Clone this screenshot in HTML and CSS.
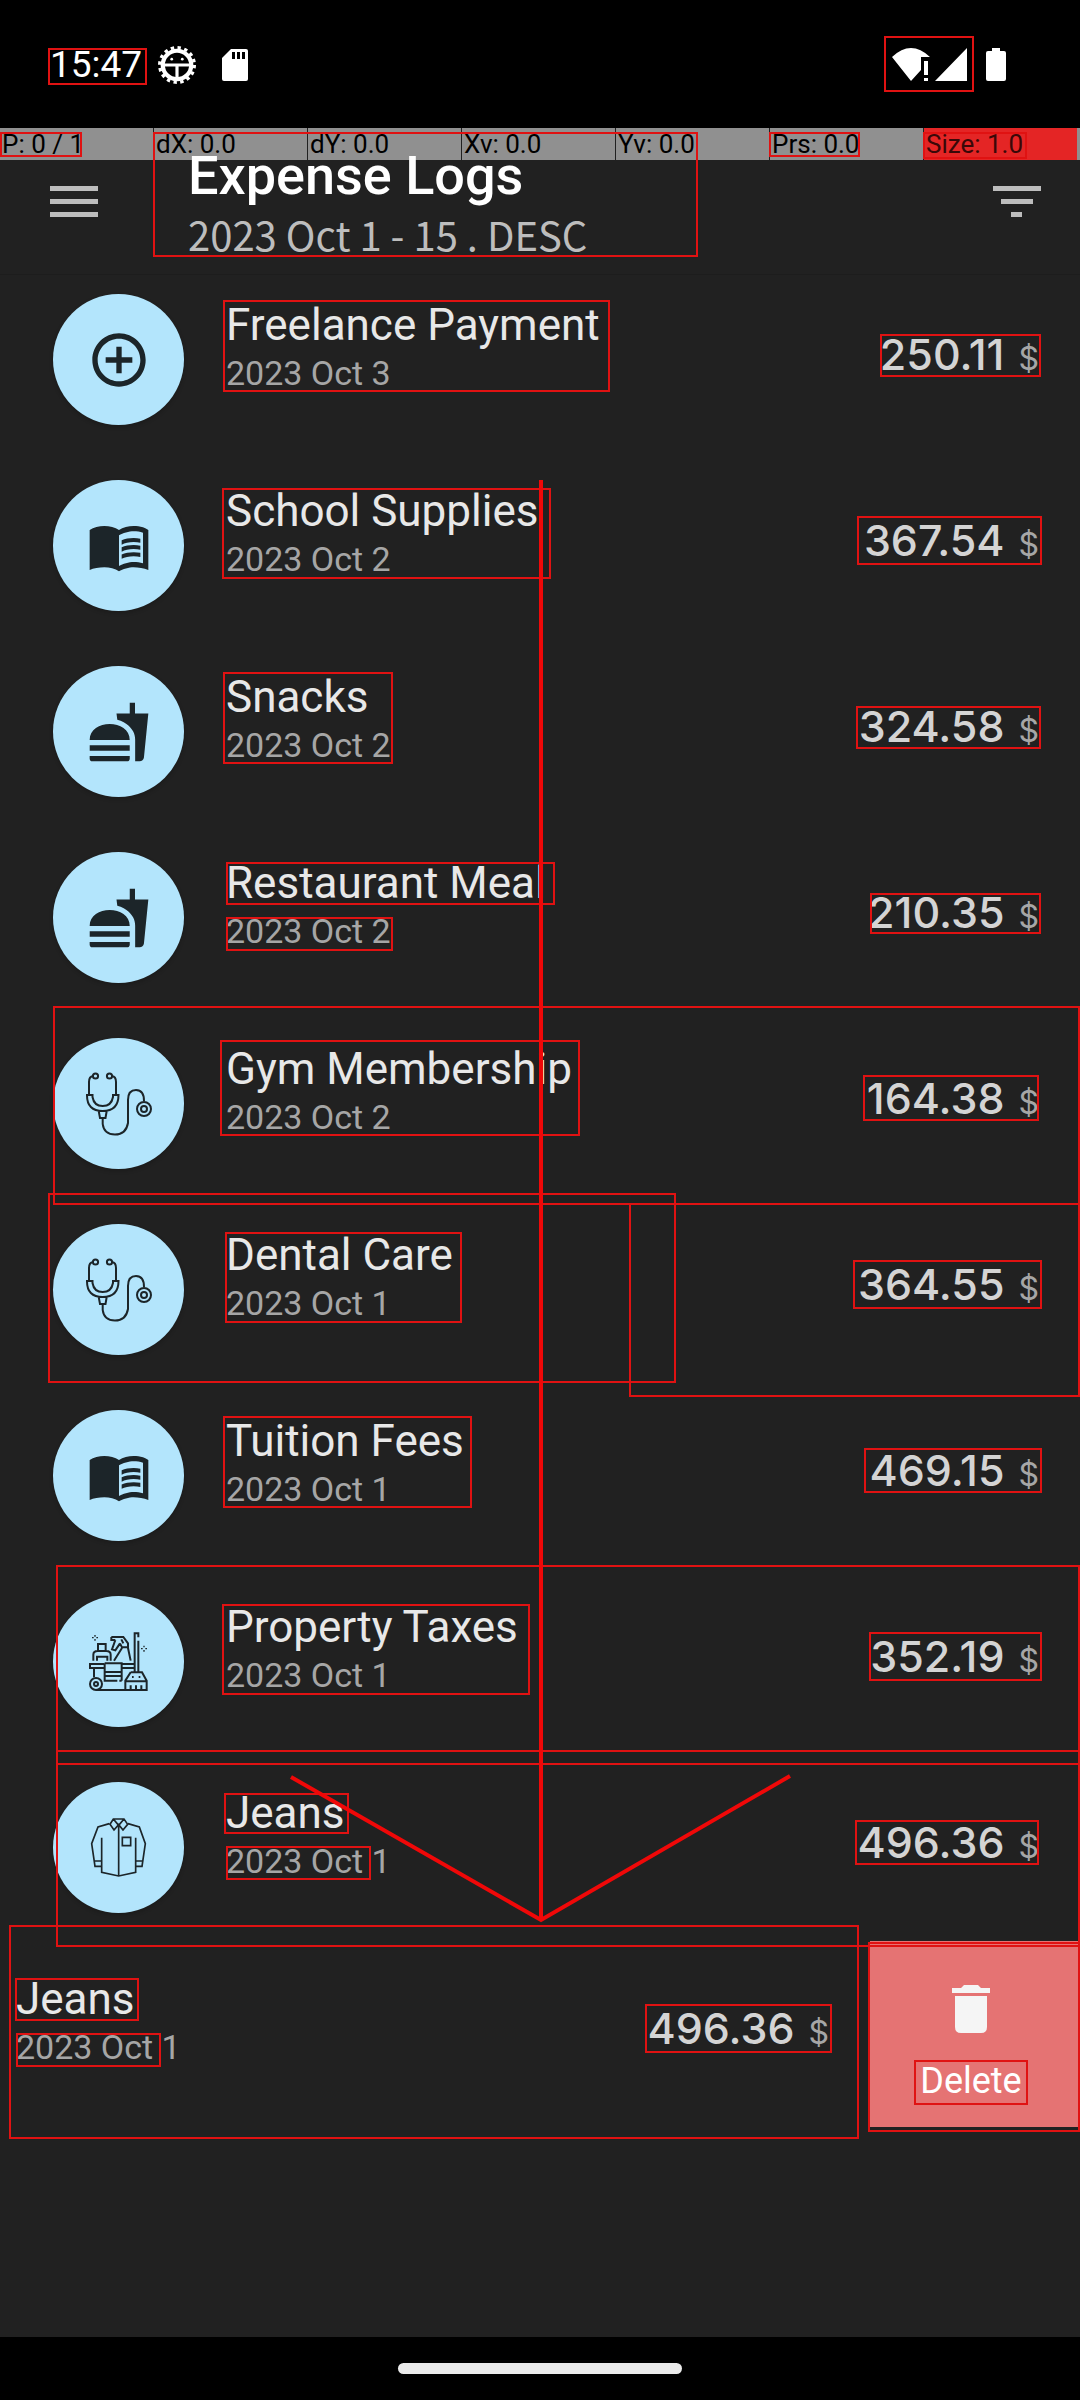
FILE: index.html
```html
<!DOCTYPE html>
<html lang="en">
<head>
<meta charset="utf-8">
<meta name="viewport" content="width=device-width, initial-scale=1">
<title>Expense Logs</title>
<link rel="stylesheet" href="styles.css">
</head>
<body>
<svg class="symbols" aria-hidden="true">
  <symbol id="i-add" viewBox="0 0 24 24"><path d="M13 7h-2v4H7v2h4v4h2v-4h4v-2h-4V7zm-1-5C6.480 2 2 6.480 2 12s4.480 10 10 10 10-4.480 10-10S17.520 2 12 2zm0 18c-4.410 0-8-3.590-8-8s3.590-8 8-8 8 3.590 8 8-3.590 8-8 8z"/></symbol>
  <symbol id="i-book" viewBox="0 0 24 24"><path d="M21 5c-1.110-.35-2.330-.5-3.500-.5-1.950 0-4.050.4-5.500 1.500-1.450-1.100-3.550-1.500-5.500-1.500S2.450 4.900 1 6v15c1.400-.7 3.500-1 5.500-1 1.950 0 4.050.4 5.500 1.500 1.350-.85 3.800-1.500 5.500-1.500 1.650 0 3.900.3 5.500 1V6c-.6-.45-1.250-.75-2-1zm0 13.500c-1.100-.35-2.300-.5-3.500-.5-1.700 0-4.150.65-5.500 1.500V8c1.350-.85 3.800-1.500 5.500-1.500 1.200 0 2.400.15 3.500.5v11.500z"/><path d="M17.500 10.500c.88 0 1.730.09 2.500.26V9.240c-.79-.15-1.640-.24-2.500-.24-1.700 0-3.240.29-4.500.83v1.660c1.130-.64 2.700-.99 4.500-.99zM13 12.490v1.660c1.130-.64 2.700-.99 4.500-.99.88 0 1.730.09 2.500.26V11.900c-.79-.15-1.640-.24-2.500-.24-1.700 0-3.240.3-4.500.83zm4.500 1.840c-1.700 0-3.240.29-4.500.83v1.660c1.130-.64 2.700-.99 4.500-.99.88 0 1.730.09 2.500.26v-1.520c-.79-.16-1.640-.24-2.500-.24z"/></symbol>
  <symbol id="i-food" viewBox="0 0 24 24"><path d="M18.060 22.990h1.660c.84 0 1.530-.64 1.630-1.460L23 5.050h-5V1h-1.970v4.050h-4.970l.3 2.340c1.710.47 3.310 1.320 4.270 2.260 1.440 1.420 2.430 2.890 2.430 5.290v8.050zM1 21.990V21h15.030v.99c0 .55-.45 1-1.010 1H2.010c-.56 0-1.010-.45-1.010-1zm15.030-7c0-8-15.030-8-15.030 0h15.030zM1.020 17h15v2h-15z"/></symbol>
  <symbol id="i-steth" viewBox="0 0 66 64"><g fill="none" stroke="currentColor" stroke-width="2"><circle cx="9.500" cy="4" r="2.600"/><circle cx="23.500" cy="4" r="2.600"/><path d="M7 4Q3 4.500 3 10V23M26 4Q30 4.500 30 10V23M1 23H6.500V25Q8 34 16.700 34T27 25V23H32.500Q32.500 39 16.700 39T1 23ZM12.700 39L14 46H19.500L20.700 39M16.700 46V52Q18 62.500 29 62.500T42 51V28Q42 18 50 18T58 29"/><circle cx="58" cy="37" r="7"/><circle cx="58" cy="37" r="3"/></g></symbol>
  <symbol id="i-clean" viewBox="147 156 177 177"><g fill="none" stroke="currentColor" stroke-width="6"><circle cx="168" cy="312" r="18"/><circle cx="168" cy="312" r="6"/><path d="M168 330H256M162 264V292M192 252H150V264H192M246 252H282M246 264H282M194 250H245V302M194 250V302H232M194 276H245M194 288H245M238 302H245M160 242V224Q160 213 173 213H199Q212 213 212 224V242M171 242V230H202V242M174 213V192H197V213M214 171H250L264 190V202H246L240 190M214 171V180H226M226 180L216 208L226 211L240 190M246 204L222 242M264 204L272 242M244 178L250 190M284 274V160H295V172M295 182V274M272 277H306L320 302V330H256V302L272 277M256 304H320M272 316V328M288 316V328M304 316V328M276 291H281M296 291H301"/><path stroke-width="4" d="M165 165V170M165 177V182M156 173H161M169 173H174M312 197V202M312 210V215M303 206H308M316 206H321"/></g></symbol>
  <symbol id="i-shirt" viewBox="153 714 165 177"><g fill="none" stroke="currentColor" stroke-width="5"><path d="M208 731L174 741L155 791L165 859H185M264 731L298 741L316 791L306 859H287M185 773V877L236 888L287 877V773M164 843H185M287 843H307M236 736V888M247 772H272V797H247ZM220 717H252L263 733L249 750L236 734L222 750L210 733ZM220 717L236 736L252 717"/></g></symbol>
</svg>

<div class="status">
  <span class="clock">15:47</span>
  <svg class="gear" viewBox="0 0 36 36"><circle cx="18" cy="18" r="13.500" fill="none" stroke="#fff" stroke-width="4"/><circle cx="18" cy="18" r="16.500" fill="none" stroke="#fff" stroke-width="3" stroke-dasharray="3.200 3.280"/><path d="M5 18H31M18 18V31" stroke="#fff" stroke-width="3"/><circle cx="13" cy="12.500" r="1.300" fill="#fff"/><circle cx="23" cy="12.500" r="1.300" fill="#fff"/></svg>
  <svg class="sd" viewBox="0 0 26 32"><path fill="#fff" d="M9 0H24Q26 0 26 2V30Q26 32 24 32H2Q0 32 0 30V9Z"/><path d="M10 3h3v7h-3zM15 3h3v7h-3zM20 3h3v7h-3z"/></svg>
  <span class="grow"></span>
  <svg class="net" viewBox="0 0 76 34"><path fill="#fff" d="M0 9Q19 -9 38 9H29V22L19 33ZM32 13h4v14h-4zM32 30h4v3h-4zM75 0V33H43Z"/></svg>
  <svg class="battery" viewBox="0 0 20 34"><path fill="#fff" d="M6 0h8v3h4q2 0 2 2v26q0 2-2 2H2q-2 0-2-2V5q0-2 2-2h4z"/></svg>
</div>

<header class="appbar">
  <div class="pointer">
    <span>P: 0 / 1</span><span>dX: 0.0</span><span>dY: 0.0</span><span>Xv: 0.0</span><span>Yv: 0.0</span><span>Prs: 0.0</span><span class="size">Size: 1.0</span>
  </div>
  <button class="iconbtn" aria-label="Menu"><svg viewBox="0 0 48 32"><path d="M0 0h48v5H0zM0 13h48v5H0zM0 26h48v5H0z"/></svg></button>
  <div class="heading">
    <h1>Expense Logs</h1>
    <p>2023 Oct 1 - 15 . DESC</p>
  </div>
  <button class="iconbtn" aria-label="Filter"><svg viewBox="0 0 48 32"><path d="M0 0h48v5H0zM8 13h32v5H8zM18 26h11v5H18z"/></svg></button>
</header>

<main>
<ul class="list">
  <li class="row"><div class="entry"><span class="avatar"><svg class="ic"><use href="#i-add"/></svg></span><div class="text"><h2>Freelance Payment</h2><p>2023 Oct 3</p></div><p class="amount">250.11<span>$</span></p></div></li>
  <li class="row"><div class="entry"><span class="avatar"><svg class="ic"><use href="#i-book"/></svg></span><div class="text"><h2>School Supplies</h2><p>2023 Oct 2</p></div><p class="amount">367.54<span>$</span></p></div></li>
  <li class="row"><div class="entry"><span class="avatar"><svg class="ic"><use href="#i-food"/></svg></span><div class="text"><h2>Snacks</h2><p>2023 Oct 2</p></div><p class="amount">324.58<span>$</span></p></div></li>
  <li class="row"><div class="entry"><span class="avatar"><svg class="ic"><use href="#i-food"/></svg></span><div class="text"><h2>Restaurant Meal</h2><p>2023 Oct 2</p></div><p class="amount">210.35<span>$</span></p></div></li>
  <li class="row"><div class="entry"><span class="avatar"><svg class="ic wide"><use href="#i-steth"/></svg></span><div class="text"><h2>Gym Membership</h2><p>2023 Oct 2</p></div><p class="amount">164.38<span>$</span></p></div></li>
  <li class="row"><div class="entry"><span class="avatar"><svg class="ic wide"><use href="#i-steth"/></svg></span><div class="text"><h2>Dental Care</h2><p>2023 Oct 1</p></div><p class="amount">364.55<span>$</span></p></div></li>
  <li class="row"><div class="entry"><span class="avatar"><svg class="ic"><use href="#i-book"/></svg></span><div class="text"><h2>Tuition Fees</h2><p>2023 Oct 1</p></div><p class="amount">469.15<span>$</span></p></div></li>
  <li class="row"><div class="entry"><span class="avatar"><svg class="ic small"><use href="#i-clean"/></svg></span><div class="text"><h2>Property Taxes</h2><p>2023 Oct 1</p></div><p class="amount">352.19<span>$</span></p></div></li>
  <li class="row"><div class="entry"><span class="avatar"><svg class="ic small"><use href="#i-shirt"/></svg></span><div class="text"><h2>Jeans</h2><p>2023 Oct 1</p></div><p class="amount">496.36<span>$</span></p></div></li>
  <li class="row swiped"><div class="entry"><span class="avatar"><svg class="ic small"><use href="#i-shirt"/></svg></span><div class="text"><h2>Jeans</h2><p>2023 Oct 1</p></div><p class="amount">496.36<span>$</span></p></div>
    <button class="delete"><svg viewBox="0 0 38 48"><path d="M0 3H9L12 0H26L29 3H38V8H0ZM3 11H35V42Q35 48 29 48H9Q3 48 3 42Z"/></svg>Delete</button></li>
</ul>
</main>

<footer class="nav"><span class="handle"></span></footer>

<svg class="marks" viewBox="0 0 1080 2400" preserveAspectRatio="xMidYMin meet" aria-hidden="true">
  <g class="boxes">
    <rect x="49" y="49" width="97" height="35"/><rect x="885" y="37" width="88" height="54"/>
    <rect x="1" y="133" width="80" height="23"/><rect x="154" y="133" width="543" height="123"/><rect x="770" y="133" width="89" height="23"/><rect x="924" y="133" width="102" height="25"/>
    <rect x="224" y="301" width="385" height="90"/><rect x="223" y="489" width="327" height="89"/>
    <rect x="881" y="335" width="159" height="41"/><rect x="858" y="517" width="183" height="47"/><rect x="857" y="707" width="183" height="41"/><rect x="871" y="894" width="169" height="39"/>
    <rect x="224" y="673" width="168" height="90"/><rect x="227" y="863" width="327" height="41"/><rect x="227" y="918" width="165" height="32"/>
    <rect x="54" y="1007" width="1025" height="197"/><rect x="221" y="1041" width="358" height="94"/><rect x="49" y="1194" width="626" height="188"/><rect x="630" y="1204" width="449" height="192"/><rect x="226" y="1233" width="235" height="89"/>
    <rect x="864" y="1076" width="174" height="44"/><rect x="854" y="1261" width="187" height="47"/><rect x="865" y="1449" width="176" height="43"/><rect x="870" y="1633" width="171" height="47"/>
    <rect x="224" y="1417" width="247" height="90"/><rect x="57" y="1566" width="1022" height="198"/><rect x="223" y="1605" width="306" height="89"/><rect x="57" y="1751" width="1022" height="195"/>
    <rect x="225" y="1794" width="123" height="39"/><rect x="227" y="1847" width="143" height="32"/><rect x="856" y="1821" width="182" height="43"/>
    <rect x="10" y="1926" width="848" height="212"/><rect x="16" y="1979" width="122" height="41"/><rect x="17" y="2034" width="143" height="32"/><rect x="646" y="2005" width="185" height="47"/>
    <rect x="869" y="1943" width="210" height="188"/><rect x="915" y="2061" width="112" height="43"/>
  </g>
  <path class="arrow" d="M541 480V1920M291 1777L541 1920L790 1776"/>
</svg>
</body>
</html>
```

FILE: styles.css
```css
* { box-sizing: border-box; margin: 0; padding: 0; }

body {
  position: relative;
  display: flex;
  flex-direction: column;
  min-height: 100vh;
  background: #212121;
  color: #e8e8e8;
  font-family: Roboto, sans-serif;
  overflow-x: hidden;
}

button { border: 0; background: none; font: inherit; color: inherit; }
.symbols { position: absolute; width: 0; height: 0; }

.status {
  display: flex;
  align-items: center;
  height: 128px;
  padding: 2px 74px 0 50px;
  background: #000;
}
.clock { width: 108px; font-size: 37px; line-height: 44px; color: #fff; }
.gear { width: 38px; height: 38px; }
.sd { width: 26px; height: 32px; margin-left: 26px; }
.grow { flex: 1; }
.net { width: 76px; height: 34px; margin-right: 18px; }
.battery { width: 20px; height: 34px; }

.appbar {
  position: relative;
  z-index: 1;
  display: flex;
  align-items: center;
  height: 147px;
  padding: 2px 39px 0 50px;
  background: #212121;
  border-bottom: 1px solid #1d1d1d;
}
.iconbtn { width: 48px; height: 32px; }
.iconbtn svg { display: block; width: 48px; height: 32px; fill: #bdbdbd; }
.heading { position: relative; flex: 1; padding: 4px 0 0 90px; }
.heading h1 { font-size: 54px; line-height: 60px; font-weight: 500; color: #fff; }
.heading p {
  font-family: "Noto Sans CJK SC", sans-serif;
  font-size: 40px;
  line-height: 56px;
  color: #bdbdbd;
}

.pointer {
  position: absolute;
  top: 0;
  left: 0;
  right: 0;
  display: grid;
  grid-template-columns: 153px repeat(6, 154px) 1fr;
  height: 32px;
  background: #909090;
  color: #000;
  font-size: 26px;
  line-height: 32px;
  white-space: nowrap;
}
.pointer span { padding-left: 2px; border-left: 1px solid #212121; }
.pointer span:first-child { border-left: 0; }
.pointer .size { background: #e42525; color: #3a0808; }

.list { list-style: none; margin-top: -8px; }
.row { display: flex; height: 186px; overflow: hidden; }
.entry {
  flex: 0 0 100%;
  display: flex;
  align-items: flex-start;
  padding: 27px 41px 0 53px;
}
.avatar {
  display: grid;
  place-items: center;
  width: 131px;
  height: 131px;
  border-radius: 50%;
  background: #b3e5fc;
  box-shadow: 0 2px 4px rgba(0, 0, 0, 0.2);
}
.ic { width: 64px; height: 64px; fill: #1c2529; color: #1c2529; }
.ic.wide { width: 66px; height: 64px; }
.ic.small { width: 59px; height: 59px; }
.text { flex: 1; padding: 5px 0 0 42px; }
.text h2 { font-size: 44px; line-height: 52px; font-weight: 400; color: #e8e8e8; }
.text p { font-size: 34px; line-height: 44px; color: #a6a6a6; }
.amount {
  padding-top: 34px;
  font-family: Inter, sans-serif;
  font-size: 43px;
  line-height: 52px;
  font-weight: 500;
  color: #d4d4d4;
}
.amount span { margin-left: 14px; font-size: 32px; font-weight: 400; color: #a6a6a6; }

.swiped .entry { margin-left: -210px; }
.delete {
  flex: 0 0 210px;
  display: flex;
  flex-direction: column;
  align-items: center;
  gap: 26px;
  padding: 44px 8px 0 0;
  background: #e57373;
  color: #fff;
  font-size: 36px;
  line-height: 44px;
}
.delete svg { width: 38px; height: 48px; fill: #f5f5f5; }

.nav {
  display: flex;
  justify-content: center;
  align-items: center;
  height: 63px;
  margin-top: auto;
  background: #000;
}
.handle { width: 284px; height: 11px; border-radius: 6px; background: #ebebeb; }

.marks { position: absolute; top: 0; left: 0; z-index: 2; width: 100%; pointer-events: none; }
.boxes rect { fill: none; stroke: #e01212; stroke-width: 2; }
.arrow { fill: none; stroke: #f00808; stroke-width: 4; }
```
